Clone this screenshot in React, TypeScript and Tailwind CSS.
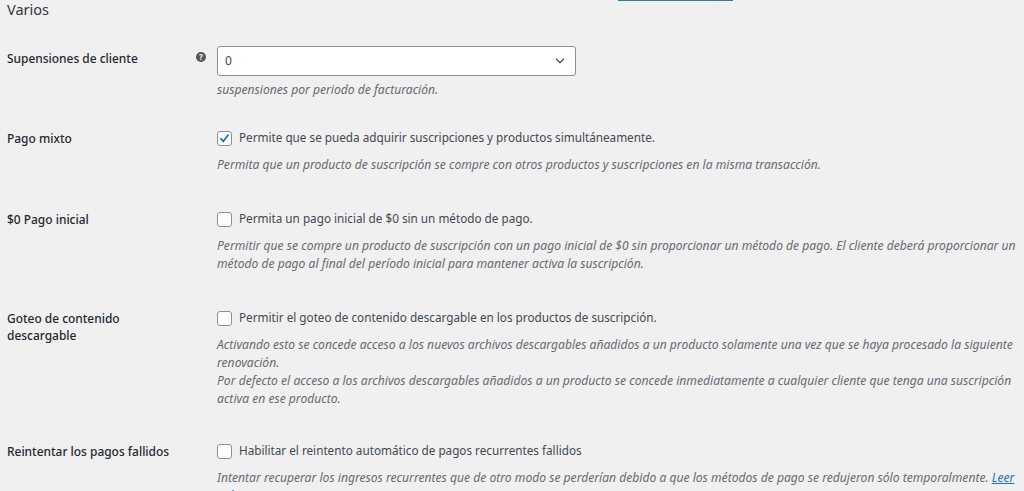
import { ChevronDown } from "lucide-react";
import type { ReactNode } from "react";

function Check({ checked = false }: { checked?: boolean }) {
  return (
    <span className="flex h-[15px] w-[15px] shrink-0 items-center justify-center rounded-[3px] border border-[#8c8f94] bg-white">
      {checked && (
        <svg viewBox="0 0 16 16" className="h-[14px] w-[14px]">
          <path d="M3 8.2 6.5 12 13 3.6" fill="none" stroke="#2271b1" strokeWidth="2.2" />
        </svg>
      )}
    </span>
  );
}

function Row({
  label,
  checked,
  text,
  className,
  children,
}: {
  label: ReactNode;
  checked?: boolean;
  text: string;
  className: string;
  children: ReactNode;
}) {
  return (
    <div className={`flex ${className}`}>
      <div className="w-[210px] shrink-0 pt-px text-[11.95px] font-medium leading-[17px] text-[#23282d]">{label}</div>
      <div className="min-w-0 flex-1">
        <div className="flex h-[18px] items-center gap-[7px]">
          <Check checked={checked} />
          <span>{text}</span>
        </div>
        <div className="mt-[9px] whitespace-nowrap text-[12.12px] italic leading-[18px] text-[#666b70]">{children}</div>
      </div>
    </div>
  );
}

export default function App() {
  return (
    <div className="h-[491px] w-[1024px] overflow-hidden bg-[#f0f0f1] pl-[7px] font-['Noto_Sans',sans-serif] text-[11.72px] text-[#43494f]">
      <div className="ml-[611px] h-[1px] w-[115px] bg-[#2a7ea8]" />
      <h2 className="-mt-[1px] text-[14.5px] leading-[18px] text-[#32373c]">Varios</h2>

      <div className="mt-[28px] flex">
        <div className="flex w-[210px] shrink-0 justify-between pr-[11px] pt-[4px]">
          <span className="text-[11.95px] font-medium leading-[17px] text-[#23282d]">Supensiones de cliente</span>
          <span className="mt-[2px] flex h-[10px] w-[10px] items-center justify-center rounded-full bg-[#555] text-[8px] font-bold leading-none text-white">
            ?
          </span>
        </div>
        <div>
          <div className="flex h-[30px] w-[359px] items-center justify-between rounded-[3px] border border-[#8c8f94] bg-white pl-[7px] pr-[8px] text-[12px]">
            <span>0</span>
            <ChevronDown className="h-[14px] w-[14px] text-[#50575e]" strokeWidth={2.4} />
          </div>
          <p className="mt-[5px] text-[12.12px] italic leading-[18px] text-[#666b70]">suspensiones por periodo de facturación.</p>
        </div>
      </div>

      <Row className="mt-[30px]" label="Pago mixto" checked text="Permite que se pueda adquirir suscripciones y productos simultáneamente.">
        Permita que un producto de suscripción se compre con otros productos y suscripciones en la misma transacción.
      </Row>

      <Row className="mt-[36px]" label="$0 Pago inicial" text="Permita un pago inicial de $0 sin un método de pago.">
        Permitir que se compre un producto de suscripción con un pago inicial de $0 sin proporcionar un método de pago. El cliente deberá proporcionar un
        <br />
        método de pago al final del período inicial para mantener activa la suscripción.
      </Row>

      <Row className="mt-[36px]" label={<>Goteo de contenido<br />descargable</>} text="Permitir el goteo de contenido descargable en los productos de suscripción.">
        Activando esto se concede acceso a los nuevos archivos descargables añadidos a un producto solamente una vez que se haya procesado la siguiente
        <br />
        renovación.
        <br />
        Por defecto el acceso a los archivos descargables añadidos a un producto se concede inmediatamente a cualquier cliente que tenga una suscripción
        <br />
        activa en ese producto.
      </Row>

      <Row className="mt-[34px]" label="Reintentar los pagos fallidos" text="Habilitar el reintento automático de pagos recurrentes fallidos">
        Intentar recuperar los ingresos recurrentes que de otro modo se perderían debido a que los métodos de pago se redujeron sólo temporalmente.{" "}
        <span className="text-[#2271b1] underline">Leer</span>
        <br />
        <span className="text-[#2271b1] underline">más</span>
      </Row>
    </div>
  );
}
